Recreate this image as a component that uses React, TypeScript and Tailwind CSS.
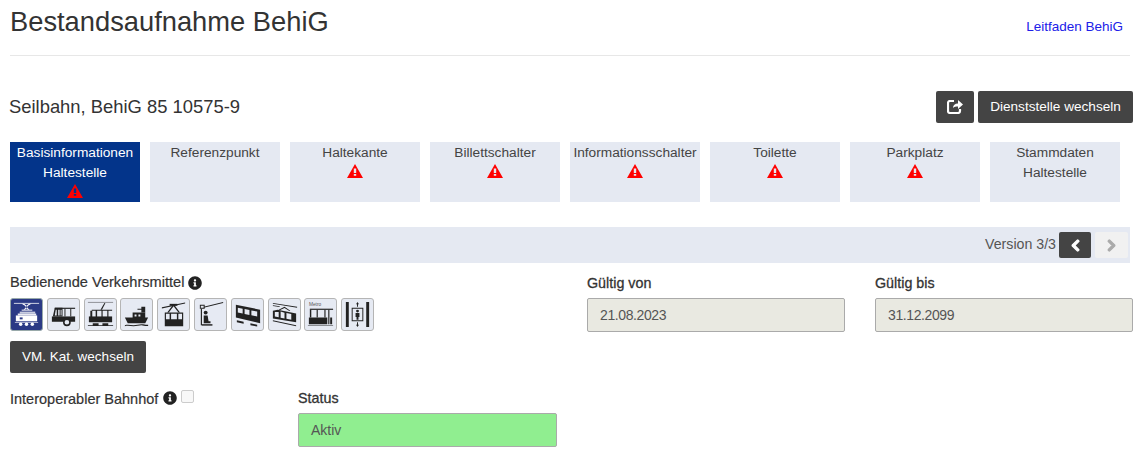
import { FaChevronLeft, FaChevronRight, FaInfoCircle } from 'react-icons/fa';
import type { ReactNode } from 'react';

const tabs = [
  { label: 'Basisinformationen Haltestelle', warn: true, active: true },
  { label: 'Referenzpunkt', warn: false },
  { label: 'Haltekante', warn: true },
  { label: 'Billettschalter', warn: true },
  { label: 'Informationsschalter', warn: true },
  { label: 'Toilette', warn: true },
  { label: 'Parkplatz', warn: true },
  { label: 'Stammdaten Haltestelle', warn: false },
];

// Verkehrsmittel pictograms, drawn on a 32x32 box
const vehicles: ReactNode[] = [
  <g key="train" fill="currentColor">
    <path d="M3 4h26v1H3z" opacity="0.8" />
    <path d="M11 5l5 3-3 3h1.500l3-3-4-3zM21 5l-5 3 3 3h-1.500l-3-3 4-3z" />
    <path d="M11 11h11v1H11z" />
    <path d="M9 13h16v2H9z" opacity="0.75" />
    <path d="M7 15h19v2H7z" opacity="0.9" />
    <path d="M5 17h22v6H5z" />
    <path d="M9 19h3v2H9z" fill="#2b3a85" />
    <circle cx="10" cy="26" r="1.800" />
    <circle cx="16" cy="26" r="1.800" />
    <circle cx="22" cy="26" r="1.800" />
    <path d="M4 24h24v.6H4z" />
  </g>,
  <g key="bus" fill="currentColor">
    <path d="M7 9h21v1.200H7z" />
    <path d="M7 9h8v9H5zM8 11l-1 6h2v-6zM10.500 11v6H12v-6zM13 11v6h1v-6zM17 10h1v8h-1zM23 10h1v8h-1z" fillRule="evenodd" />
    <path d="M4 18h24v5.500H4z" />
    <circle cx="19.500" cy="24" r="3.200" fill="#e6eaf3" stroke="currentColor" strokeWidth="1.600" />
  </g>,
  <g key="tram" fill="currentColor">
    <path d="M3 3h26v1H3z" opacity="0.45" />
    <path d="M16 11l4-7 1 .4-3.500 6.600z" />
    <path d="M7 11h21v1.200H7zM5.500 12h2v7h-2zM11 12h1.500v7H11zM17 12h1.200v7H17zM23 12h1.200v7H23z" />
    <path d="M4 18h24v6H4z" />
    <path d="M3 27h26v.8H3zM8 25h6v2H8zM18 25h6v2h-6z" />
  </g>,
  <g key="ship" fill="currentColor">
    <path d="M21 8h4v6h-4z" />
    <path d="M17 10h5v1h-5zM12 14h13v6H12zM14 16v2h2v-2zM18 16v2h2v-2z" fillRule="evenodd" />
    <path d="M4 19h24l-3 6H7z" />
    <path d="M4 27c3-1 6 0 9 0s5-1 8-1 5 1 7 .6v1.200c-3 .4-5-.8-7-.8s-5 1-8 1-6-1-9 0z" />
  </g>,
  <g key="cable" fill="currentColor">
    <path d="M4 8.500l24-5v1.200l-24 5z" />
    <path d="M12 5h8v2h-8z" />
    <path d="M15.500 6l-6 8h1.600l5-6.400 5 6.400h1.600l-6-8z" />
    <path d="M7 14h19v14H7zM8.200 15.200V21H12v-5.800zM13.500 15.200V21h6v-5.800zM21 15.200V21h3.800v-5.800z" fillRule="evenodd" />
  </g>,
  <g key="chair" fill="currentColor">
    <path d="M9 8L29 3v1L9 9z" />
    <path d="M5 6h5v4H5zM6 7v2h3V7z" fillRule="evenodd" />
    <path d="M6 10h1.200v17H6z" />
    <circle cx="11" cy="14" r="2" />
    <path d="M9 17h4l1 6h2v2H9z" />
    <path d="M7 26h11v1.500H7z" />
  </g>,
  <g key="funicular" fill="currentColor">
    <path d="M4 6l25 5v14L4 19z" />
    <path d="M6 9l5 1v5l-5-1zM13 10.400l5 1v5l-5-1zM20 11.800l6 1.200v5l-6-1.200z" fill="#e6eaf3" />
    <path d="M5 22l7 1.500v2L5 24zM19 25l7 1.500v2L19 27z" />
  </g>,
  <g key="rack" fill="currentColor">
    <path d="M4 4l25 4v1L4 5zM4 6.500l7 1v.8l-7-1z" />
    <path d="M10 11l6-3 6 4-1 .5-5-3.300-5 2.500z" />
    <path d="M4 12l5-1 19 4v9L4 20zM6 13.500V18l4 .8v-5.500zM12 13v6.300l4 .8v-6zM18 14.500v6l5 1v-6z" fillRule="evenodd" />
    <path d="M4 22l24 5v1L4 23z" />
  </g>,
  <g key="metro" fill="currentColor">
    <text x="4" y="7.500" fontSize="5" fontFamily="Liberation Sans, sans-serif" opacity="0.75">Metro</text>
    <path d="M5 10h24v1.200H5z" />
    <path d="M5 11h1.500v8H5zM12 11h1.200v8H12zM20 11h1.200v8H20zM24 11h1.200v15H24z" />
    <path d="M4 19h19v7H4zM26 19h2v7h-2z" />
    <path d="M3 27h26v.8H3z" opacity="0.6" />
  </g>,
  <g key="lift" fill="currentColor">
    <path d="M4 3h3v26H4zM25 3h3v26h-3z" />
    <path d="M10 9h12v14H10zM11 10v12h10V10z" fillRule="evenodd" />
    <circle cx="16" cy="12.500" r="1.500" />
    <path d="M14 14.500h4v4h-1v3h-2v-3h-1z" />
    <path d="M16 3l1.500 2.500h-1V8h-1V5.500h-1zM16 29l-1.500-2.500h1V24h1v2.500h1z" />
  </g>,
];

function WarnIcon() {
  return (
    <svg viewBox="0 0 16 14" className="mt-[1px] h-[14px] w-[16px] text-[#ff0000]">
      <path fill="currentColor" fillRule="evenodd" d="M8 0l8 14H0zM6.800 4.500v4.500h2.400V4.500zM6.800 10v1.800h2.400V10z" />
    </svg>
  );
}

function DateField({ label, value }: { label: string; value: string }) {
  return (
    <div className="w-[288px] shrink-0 pr-[30px]">
      <label className="block h-[20px] text-[14.3px] leading-[20px] text-[#333] [-webkit-text-stroke:0.3px_#333]">{label}</label>
      <div className="mt-[5px] flex h-[34px] items-center rounded-[2px] border border-[#aaa] bg-[#e9e9e1] px-3 text-[14px] tracking-[-0.4px] text-[#555]">
        {value}
      </div>
    </div>
  );
}

export default function App() {
  return (
    <div className="h-[454px] w-[1140px] overflow-hidden bg-white font-['Liberation_Sans',Arial,sans-serif] text-[14px] text-[#333]">
      <div className="mx-[10px] flex h-[56px] items-start justify-between border-b border-[#e7e7e7]">
        <h1 className="mt-[4px] text-[27.3px] leading-[36px] text-[#333]">Bestandsaufnahme BehiG</h1>
        <a className="mr-[7px] mt-[18px] text-[13.5px] leading-[17px] text-[#2020e8]">Leitfaden BehiG</a>
      </div>

      <div className="mx-[7px] mt-[34px] flex h-[34px] items-center justify-between pl-[2px]">
        <h2 className="text-[18.4px] leading-[34px] text-[#333]">Seilbahn, BehiG 85 10575-9</h2>
        <div className="flex gap-[4px]">
          <button className="flex h-[32px] w-[38px] items-center justify-center rounded-[2px] bg-[#444] text-white">
            <svg viewBox="0 0 16 14" className="h-[14px] w-[16px]" fill="currentColor">
              <path d="M6 8c0-3 2-4.500 5-4.500V0l5 4.500L11 9V6.500C9 6.500 7 6.800 6 8z" />
              <path d="M7 1H3a2 2 0 0 0-2 2v8a2 2 0 0 0 2 2h8a2 2 0 0 0 2-2V9" fill="none" stroke="currentColor" strokeWidth="2.200" />
            </svg>
          </button>
          <button className="h-[32px] w-[155px] rounded-[2px] bg-[#444] text-[13.6px] text-white">Dienststelle wechseln</button>
        </div>
      </div>

      <div className="ml-[10px] mt-[18px] flex gap-[10px]">
        {tabs.map((tab) => (
          <div
            key={tab.label}
            className={
              tab.active
                ? 'flex h-[60px] w-[130px] flex-col items-center bg-[#03348a] pt-px text-center text-[13.7px] leading-[20px] text-white'
                : 'flex h-[60px] w-[130px] flex-col items-center bg-[#e5e9f2] pt-px text-center text-[13.7px] leading-[20px] text-[#444]'
            }
          >
            <span className="whitespace-pre-line">{tab.label.replace(' ', '\n')}</span>
            {tab.warn && <WarnIcon />}
          </div>
        ))}
      </div>

      <div className="mx-[10px] mt-[25px] flex h-[36px] items-center justify-end gap-[3px] bg-[#e5e9f2] pr-[2px] text-[#555]">
        <span className="text-[14.2px]">Version 3/3</span>
        <button className="flex h-[26px] w-[32px] items-center justify-center rounded-[2px] bg-[#444] text-white">
          <FaChevronLeft className="h-[13px] w-[13px]" stroke="currentColor" strokeWidth={50} />
        </button>
        <button className="ml-[1px] flex h-[26px] w-[33px] items-center justify-center rounded-[2px] bg-[#f1f1f1] text-[#aaa]">
          <FaChevronRight className="h-[13px] w-[13px]" stroke="currentColor" strokeWidth={50} />
        </button>
      </div>

      <div className="ml-[10px] mt-[10px] flex">
        <div className="w-[577px] shrink-0">
          <div className="flex h-[20px] items-center gap-[4px]">
            <span className="text-[14.6px] [-webkit-text-stroke:0.2px_#333]">Bedienende Verkehrsmittel</span>
            <FaInfoCircle className="h-[14px] w-[14px] text-[#222]" />
          </div>
          <div className="mt-[5px] flex gap-[3.800px]">
            {vehicles.map((icon, i) => (
              <div
                key={i}
                className={
                  i === 0
                    ? 'h-[33px] w-[33px] rounded-[3px] border border-[#9aa] bg-[#2b3a85] text-white'
                    : 'h-[33px] w-[33px] rounded-[3px] border border-[#b5b5b5] bg-[#e6eaf3] text-[#222]'
                }
              >
                <svg viewBox="0 0 32 32" className="h-full w-full">
                  {icon}
                </svg>
              </div>
            ))}
          </div>
          <button className="mt-[10px] h-[32px] w-[136px] rounded-[2px] bg-[#444] text-[13.5px] text-white">VM. Kat. wechseln</button>
        </div>
        <DateField label="Gültig von" value="21.08.2023" />
        <DateField label="Gültig bis" value="31.12.2099" />
      </div>

      <div className="ml-[10px] mt-[15px] flex">
        <div className="flex h-[20px] w-[288px] shrink-0 items-start gap-[4px]">
          <span className="mt-[1px] text-[14.5px] leading-[20px] [-webkit-text-stroke:0.2px_#333]">Interoperabler Bahnhof</span>
          <FaInfoCircle className="mt-[3px] ml-[1px] h-[14px] w-[14px] text-[#222]" />
          <span className="mt-[2px] h-[13px] w-[13px] rounded-[2px] border border-[#ccc] bg-[#f8f8f8]" />
        </div>
        <div className="w-[259px]">
          <label className="block h-[20px] text-[14.3px] leading-[20px] [-webkit-text-stroke:0.3px_#333]">Status</label>
          <div className="mt-[5px] flex h-[34px] items-center rounded-[2px] border border-[#aaa] bg-[#90ee90] px-3 text-[14px] text-[#555]">
            Aktiv
          </div>
        </div>
      </div>
    </div>
  );
}
